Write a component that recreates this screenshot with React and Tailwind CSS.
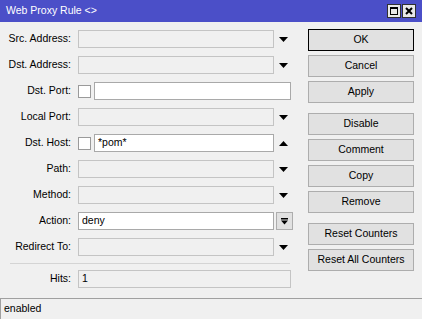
/**
 * Web Proxy Rule dialog (Winbox style)
 */

const font = { fontFamily: '"Liberation Sans", Arial, sans-serif' };

function Arrow({ up = false }) {
  return (
    <div className="w-[18px] h-[18px] flex items-center justify-center">
      <svg width="9" height="5" viewBox="0 0 9 5">
        {up ? <polygon points="0,5 9,5 4.5,0" fill="#000" /> : <polygon points="0,0 9,0 4.5,5" fill="#000" />}
      </svg>
    </div>
  );
}

function Label({ children }) {
  return <div className="w-[72px] text-right shrink-0 pr-[1px]">{children}</div>;
}

function Box({ value = '', enabled = false, className = '' }) {
  return (
    <div
      className={`h-[18px] border flex items-center px-[3px] ${enabled ? 'bg-white border-[#a9a9a9]' : 'bg-[#f0f0f0] border-[#c4c4c4]'} ${className}`}
    >
      {value}
    </div>
  );
}

function Check() {
  return <div className="w-[13px] h-[13px] bg-white border border-[#9a9a9a] shrink-0 mr-[3px]" />;
}

function Row({ label, children }) {
  return (
    <div className="flex items-center h-[18px]">
      <Label>{label}</Label>
      <div className="ml-[6px] flex items-center">{children}</div>
    </div>
  );
}

function Btn({ children, primary = false }) {
  return (
    <div
      className={`h-[22px] w-[106px] flex items-center justify-center bg-[#e1e1e1] border ${primary ? 'border-black' : 'border-[#adadad]'}`}
    >
      {children}
    </div>
  );
}

export default function App() {
  return (
    <div className="w-[422px] h-[319px] bg-[#f0f0f0] flex flex-col text-[10.5px] text-black overflow-hidden" style={font}>
      <div className="h-[22px] bg-[#4b4fc8] flex items-center justify-between pl-[6px] pr-[6px] shrink-0">
        <span className="text-white text-[10.5px]">Web Proxy Rule &lt;&gt;</span>
        <div className="flex gap-[1px]">
          <div className="w-[14px] h-[14px] bg-[#e8e8e8] border border-[#303030] flex items-center justify-center">
            <div className="w-[8px] h-[8px] border border-black border-t-2" />
          </div>
          <div className="w-[14px] h-[14px] bg-[#e8e8e8] border border-[#303030] flex items-center justify-center">
            <svg width="8" height="8" viewBox="0 0 8 8">
              <path d="M1 1 L7 7 M7 1 L1 7" stroke="#000" strokeWidth="2" />
            </svg>
          </div>
        </div>
      </div>

      <div className="flex flex-1">
        <div className="flex flex-col pt-[8px] w-[300px]">
          <div className="flex flex-col gap-[8px]">
            <Row label="Src. Address:">
              <Box className="w-[196px]" />
              <Arrow />
            </Row>
            <Row label="Dst. Address:">
              <Box className="w-[196px]" />
              <Arrow />
            </Row>
            <Row label="Dst. Port:">
              <Check />
              <Box enabled className="w-[197px]" />
            </Row>
            <Row label="Local Port:">
              <Box className="w-[196px]" />
              <Arrow />
            </Row>
            <Row label="Dst. Host:">
              <Check />
              <Box enabled value="*pom*" className="w-[180px]" />
              <Arrow up />
            </Row>
            <Row label="Path:">
              <Box className="w-[196px]" />
              <Arrow />
            </Row>
            <Row label="Method:">
              <Box className="w-[196px]" />
              <Arrow />
            </Row>
            <Row label="Action:">
              <Box enabled value="deny" className="w-[196px]" />
              <div className="ml-[2px] w-[17px] h-[18px] bg-[#e1e1e1] border border-[#adadad] flex items-center justify-center">
                <svg width="7" height="7" viewBox="0 0 7 7">
                  <rect x="0" y="0" width="7" height="1.5" fill="#000" />
                  <polygon points="0,2.5 7,2.5 3.5,6.5" fill="#000" />
                </svg>
              </div>
            </Row>
            <Row label="Redirect To:">
              <Box className="w-[196px]" />
              <Arrow />
            </Row>
          </div>
          <div className="mt-[7px] ml-[10px] w-[280px] h-[1px] bg-[#d4d4d4]" />
          <div className="mt-[6px]">
            <Row label="Hits:">
              <Box value="1" className="w-[213px]" />
            </Row>
          </div>
        </div>

        <div className="flex flex-col pt-[7px] ml-[8px]">
          <div className="flex flex-col gap-[4px]">
            <Btn primary>OK</Btn>
            <Btn>Cancel</Btn>
            <Btn>Apply</Btn>
          </div>
          <div className="flex flex-col gap-[4px] mt-[10px]">
            <Btn>Disable</Btn>
            <Btn>Comment</Btn>
            <Btn>Copy</Btn>
            <Btn>Remove</Btn>
          </div>
          <div className="flex flex-col gap-[4px] mt-[10px]">
            <Btn>Reset Counters</Btn>
            <Btn>Reset All Counters</Btn>
          </div>
        </div>
      </div>

      <div className="h-[21px] border-t border-[#a0a0a0] flex items-center shrink-0 pr-[5px]">
        <div className="flex-1 h-full flex items-center pl-[3px] border-l border-[#a0a0a0]">enabled</div>
      </div>
    </div>
  );
}
